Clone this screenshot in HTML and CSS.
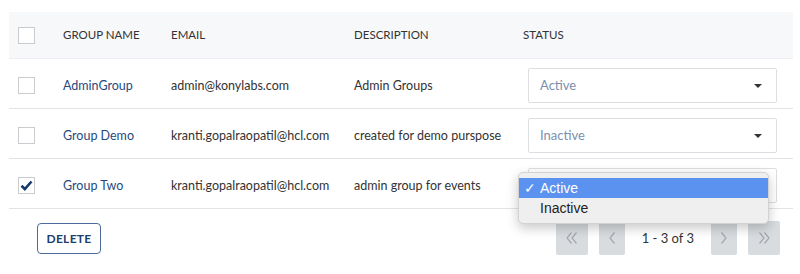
FILE: index.html
```html
<!DOCTYPE html>
<html lang="en">
<head>
<meta charset="utf-8">
<title>Groups</title>
<link rel="stylesheet" href="styles.css">
</head>
<body>
<div class="wrap">
	<table class="grid">
		<colgroup>
			<col class="w-chk"><col class="w-name"><col class="w-mail"><col class="w-desc"><col>
		</colgroup>
		<thead>
			<tr>
				<th class="c-chk"><span class="box"></span></th>
				<th>GROUP NAME</th>
				<th>EMAIL</th>
				<th>DESCRIPTION</th>
				<th>STATUS</th>
			</tr>
		</thead>
		<tbody>
			<tr>
				<td class="c-chk"><span class="box"></span></td>
				<td><a href="#">AdminGroup</a></td>
				<td>admin@konylabs.com</td>
				<td>Admin Groups</td>
				<td><div class="sel">Active<span class="caret"></span></div></td>
			</tr>
			<tr>
				<td class="c-chk"><span class="box"></span></td>
				<td><a href="#">Group Demo</a></td>
				<td>kranti.gopalraopatil@hcl.com</td>
				<td>created for demo purspose</td>
				<td><div class="sel">Inactive<span class="caret"></span></div></td>
			</tr>
			<tr>
				<td class="c-chk"><span class="box">
					<svg width="13" height="11" viewBox="0 0 13 11"><path d="M1.5 5.8 L4.8 9 L11.5 1.5" fill="none" stroke="#163a6b" stroke-width="2.6"/></svg>
				</span></td>
				<td><a href="#">Group Two</a></td>
				<td>kranti.gopalraopatil@hcl.com</td>
				<td>admin group for events</td>
				<td><div class="sel">Active<span class="caret"></span></div></td>
			</tr>
		</tbody>
	</table>

	<div class="foot">
		<button class="del">DELETE</button>
		<div class="pager">
			<span class="pg wide"><svg width="14" height="14" viewBox="0 0 14 14"><path d="M6.5 1.5 L2 7 L6.5 12.5 M11.5 1.5 L7 7 L11.5 12.5" fill="none" stroke="#a3a8b0" stroke-width="1.2"/></svg></span>
			<span class="pg"><svg width="10" height="14" viewBox="0 0 10 14"><path d="M7.5 1.5 L3 7 L7.5 12.5" fill="none" stroke="#a3a8b0" stroke-width="1.2"/></svg></span>
			<span class="count">1 - 3 of 3</span>
			<span class="pg"><svg width="10" height="14" viewBox="0 0 10 14"><path d="M2.5 1.5 L7 7 L2.5 12.5" fill="none" stroke="#a3a8b0" stroke-width="1.2"/></svg></span>
			<span class="pg wide"><svg width="14" height="14" viewBox="0 0 14 14"><path d="M2.5 1.5 L7 7 L2.5 12.5 M7.5 1.5 L12 7 L7.5 12.5" fill="none" stroke="#a3a8b0" stroke-width="1.2"/></svg></span>
		</div>
	</div>

	<ul class="menu">
		<li class="hi"><span class="tick">&#10003;</span>Active</li>
		<li>Inactive</li>
	</ul>
</div>
</body>
</html>
```

FILE: styles.css
```css
html, body {margin:0; padding:0;}
body {font:12.5px/1.4 Lato, "Open Sans", sans-serif; color:#333; background:#fff;}
.wrap {position:relative; margin:12px 7px 0 9px;}

table.grid {width:100%; border-collapse:collapse; table-layout:fixed;}
col.w-chk {width:54px;}
col.w-name {width:108px;}
col.w-mail {width:183px;}
col.w-desc {width:169px;}
table.grid th {background:#f7f8fa; font-weight:normal; font-size:11.5px; text-align:left; height:46px; padding:0; border-bottom:1px solid #eceef1; color:#333;}
table.grid td {height:45px; padding:4px 0 0; border-bottom:1px solid #e1e3e6;}
table.grid .c-chk {padding-left:9px;}
table.grid td a {color:#1f4a80; text-decoration:none;}

.box {display:flex; align-items:center; justify-content:center; width:15px; height:15px; border:1px solid #c9cbce; background:#fff;}

.sel {display:flex; align-items:center; justify-content:space-between; box-sizing:border-box; width:249px; height:35px; margin-left:5px; padding:0 14px 0 11px; border:1px solid #dcdee1; border-radius:2px; color:#7b8fad; font-size:13px;}
.caret {width:0; height:0; border-left:4px solid transparent; border-right:4px solid transparent; border-top:4px solid #333;}

.foot {display:flex; justify-content:space-between; align-items:center; padding:12px 13px 0 28px;}
.del {font:bold 12px Lato, sans-serif; letter-spacing:0.3px; color:#1e3f6e; background:#fff; border:1px solid #4b6b98; border-radius:4px; width:64px; height:31px; padding:0;}
.pager {display:flex; align-items:center; gap:11px;}
.pg {display:flex; align-items:center; justify-content:center; width:26px; height:34px; background:#d9dcdf; border-radius:2px;}
.pg.wide {width:32px;}
.count {margin:0 6px; color:#333; font-size:13px;}

.menu {position:absolute; left:509px; top:160px; width:249px; margin:0; padding:5px 0; list-style:none; background:#efefef; border:1px solid #d2d2d2; border-radius:5px; box-shadow:0 4px 12px rgba(0,0,0,0.22); font:14px/20px "Liberation Sans", Arial, sans-serif; color:#222;}
.menu li {padding-left:21px; position:relative; height:20px;}
.menu li.hi {background:#5b91ef; color:#fff;}
.tick {position:absolute; left:5px; top:0;}
```
